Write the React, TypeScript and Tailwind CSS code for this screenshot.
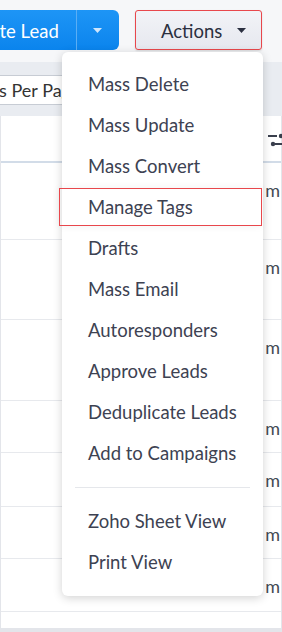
import React from "react";

const items1 = [
  "Mass Delete",
  "Mass Update",
  "Mass Convert",
  "Manage Tags",
  "Drafts",
  "Mass Email",
  "Autoresponders",
  "Approve Leads",
  "Deduplicate Leads",
  "Add to Campaigns",
];
const items2 = ["Zoho Sheet View", "Print View"];

const rows = [
  { h: "h-[77px]", text: "info@zylker.com" },
  { h: "h-[80px]", text: "sales@acme.com" },
  { h: "h-[81px]", text: "carl@zoho.com" },
  { h: "h-[52px]", text: "jane@mail.com" },
  { h: "h-[54px]", text: "tom@zylker.com" },
  { h: "h-[52px]", text: "leo@acme.com" },
  { h: "h-[53px]", text: "ann@zoho.com" },
];

function Caret({ className }: { className: string }) {
  return (
    <svg width="9" height="5" viewBox="0 0 9 5" className={className}>
      <path d="M0 0h9L4.5 5z" fill="currentColor" />
    </svg>
  );
}

export default function App() {
  return (
    <div
      className="relative w-[282px] h-[632px] overflow-hidden bg-[#f6f7f9]"
      style={{ fontFamily: "Lato, 'Open Sans', sans-serif" }}
    >
      {/* toolbar */}
      <div className="h-[62px] flex items-start pt-[10px]">
        <div className="flex h-[40px] w-[119px] overflow-hidden rounded-r-[6px] bg-gradient-to-b from-[#1d95f6] to-[#0a84ed] text-white">
          <div className="w-[76px] shrink-0 overflow-hidden flex items-center">
            <span className="ml-[-38px] pt-[2px] whitespace-nowrap text-[18.5px] leading-none">Create Lead</span>
          </div>
          <div className="w-px bg-[#5aaef5]" />
          <div className="flex-1 flex items-center justify-center pr-[2px] text-[#cfe6fc]">
            <Caret className="" />
          </div>
        </div>
        <div className="ml-[16px] h-[40px] w-[127px] rounded-[3px] border border-[#e8474c] bg-gradient-to-b from-[#f2f3f7] to-[#e6e8ef] flex items-center pl-[25px] gap-[15px] text-[#2b3040] shadow-[0_1px_2px_rgba(0,0,0,0.12)]">
          <span className="text-[18.5px] leading-none pt-[2px]">Actions</span>
          <Caret className="text-[#2b3040]" />
        </div>
      </div>

      {/* per-page band */}
      <div className="h-[54px] bg-[#e9ecf1] pt-[13px]">
        <div className="h-[30px] w-[140px] bg-white border-y border-[#c7ccd4] flex items-center overflow-hidden">
          <span className="ml-[-56px] whitespace-nowrap text-[18px] text-[#333]">Records Per Page</span>
        </div>
      </div>

      {/* table */}
      <div className="bg-white border-l border-r border-[#e3e5ea]">
        <div className="h-[47px] border-b-2 border-[#d2dce8] relative">
          <svg
            width="18"
            height="14"
            viewBox="0 0 18 14"
            className="absolute left-[266px] top-[17px] text-[#3a3f4d]"
          >
            <line x1="1" y1="3" x2="10" y2="3" stroke="currentColor" strokeWidth="2" />
            <circle cx="14" cy="3" r="2.2" fill="currentColor" />
            <circle cx="6" cy="11" r="2.2" fill="currentColor" />
            <line x1="8" y1="11" x2="18" y2="11" stroke="currentColor" strokeWidth="2" />
          </svg>
        </div>
        {rows.map((r, i) => (
          <div key={i} className={`${r.h} border-b border-[#e7e9ed] flex justify-end pr-[1px]`}>
            <div className="w-[15px] overflow-hidden flex justify-end">
              <span className="pt-[17px] text-[18px] leading-[20px] text-[#444a55] whitespace-nowrap">{r.text}</span>
            </div>
          </div>
        ))}
      </div>
      <div className="h-[20px] bg-white border-l border-r border-b-4 border-[#e3e5ea]" />

      {/* dropdown menu */}
      <div className="absolute left-[62px] top-[52px] w-[201px] rounded-[6px] bg-white shadow-[0_2px_10px_rgba(0,0,0,0.18)] pt-[12px] pb-[13px]">
        {items1.map((t) => (
          <div key={t} className="h-[41px] flex items-center pl-[26px] text-[18.5px] text-[#3d4252] whitespace-nowrap">
            {t}
          </div>
        ))}
        <div className="mx-[13px] my-[13px] h-px bg-[#e5e7eb]" />
        {items2.map((t) => (
          <div key={t} className="h-[41px] flex items-center pl-[26px] text-[18.5px] text-[#3d4252] whitespace-nowrap">
            {t}
          </div>
        ))}
        <div className="absolute left-[-3px] top-[136px] w-[203px] h-[38px] border border-[#e8474c] shadow-[0_0_8px_rgba(0,0,0,0.06)]" />
      </div>
    </div>
  );
}
